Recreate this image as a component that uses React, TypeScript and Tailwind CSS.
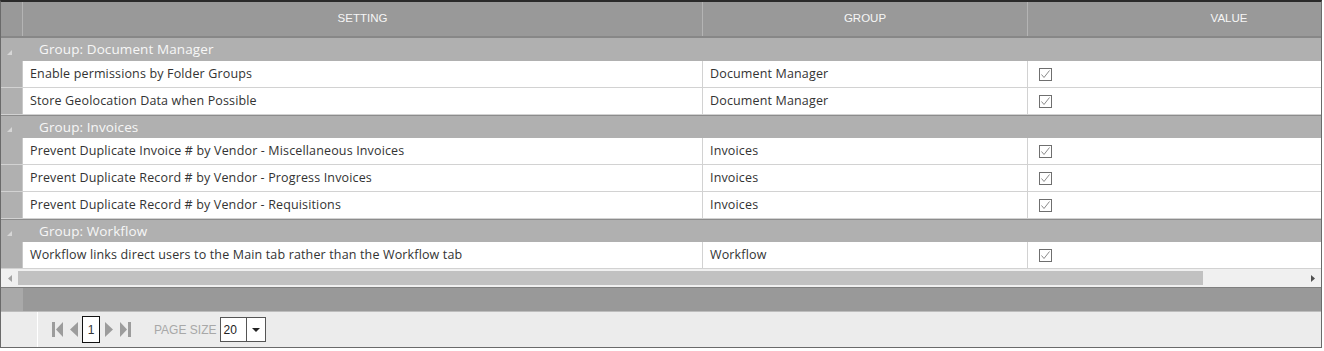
import React from 'react';

type Row = { setting: string; group: string; value: boolean };
type Group = { name: string; rows: Row[] };

const groups: Group[] = [
  {
    name: 'Document Manager',
    rows: [
      { setting: 'Enable permissions by Folder Groups', group: 'Document Manager', value: true },
      { setting: 'Store Geolocation Data when Possible', group: 'Document Manager', value: true },
    ],
  },
  {
    name: 'Invoices',
    rows: [
      { setting: 'Prevent Duplicate Invoice # by Vendor - Miscellaneous Invoices', group: 'Invoices', value: true },
      { setting: 'Prevent Duplicate Record # by Vendor - Progress Invoices', group: 'Invoices', value: true },
      { setting: 'Prevent Duplicate Record # by Vendor - Requisitions', group: 'Invoices', value: true },
    ],
  },
  {
    name: 'Workflow',
    rows: [
      { setting: 'Workflow links direct users to the Main tab rather than the Workflow tab', group: 'Workflow', value: true },
    ],
  },
];

const bodyFont = "font-['Open_Sans',sans-serif]";
const headFont = "font-['Liberation_Sans',Arial,sans-serif]";

function CheckBox({ checked }: { checked: boolean }) {
  return (
    <svg width="13" height="13" viewBox="0 0 13 13" className="block">
      <rect x="0.5" y="0.5" width="12" height="12" fill="#fff" stroke="#6f6f6f" />
      {checked && <path d="M2.5 6.5 L5 9.5 L10.5 2.5" fill="none" stroke="#8a8a8a" strokeWidth="1" />}
    </svg>
  );
}

function GroupRow({ name, first }: { name: string; first: boolean }) {
  return (
    <div className={`flex h-[23px] bg-[#b0b0b0] ${first ? '' : 'border-t border-[#8c8c8c]'}`}>
      <div className="w-[22px] shrink-0 flex items-end pb-[6px] pl-[6px]">
        <svg width="5" height="5" viewBox="0 0 5 5">
          <path d="M5 0 L5 5 L0 5 Z" fill="#d6d6d6" />
        </svg>
      </div>
      <div className={`pl-[16px] flex items-center text-[13.5px] tracking-[0.1px] text-[#f7f7f7] ${bodyFont}`}>Group: {name}</div>
    </div>
  );
}

function DataRow({ row }: { row: Row }) {
  return (
    <div className={`flex h-[27px] border-b border-[#d2d2d2] bg-white text-[12.5px] tracking-[0.15px] text-[#333] ${bodyFont}`}>
      <div className="w-[22px] shrink-0 bg-[#b0b0b0] border-r border-[#c8c8c8]" />
      <div className="w-[680px] shrink-0 border-r border-[#d2d2d2] flex items-center pl-[7px] whitespace-nowrap">
        {row.setting}
      </div>
      <div className="w-[325px] shrink-0 border-r border-[#d2d2d2] flex items-center pl-[7px] whitespace-nowrap">
        {row.group}
      </div>
      <div className="w-[402px] shrink-0 flex items-center pl-[11px]">
        <CheckBox checked={row.value} />
      </div>
    </div>
  );
}

function PagerIcon({ kind }: { kind: 'first' | 'prev' | 'next' | 'last' }) {
  const c = '#9c9c9c';
  return (
    <svg width="11" height="15" viewBox="0 0 11 15" className="block">
      {kind === 'first' && (
        <>
          <rect x="0" y="0" width="3" height="15" fill={c} />
          <path d="M11 0 L4 7.5 L11 15 Z" fill={c} />
        </>
      )}
      {kind === 'prev' && <path d="M9 0 L1 7.5 L9 15 Z" fill={c} />}
      {kind === 'next' && <path d="M1 0 L9 7.5 L1 15 Z" fill={c} />}
      {kind === 'last' && (
        <>
          <path d="M0 0 L7 7.5 L0 15 Z" fill={c} />
          <rect x="8" y="0" width="3" height="15" fill={c} />
        </>
      )}
    </svg>
  );
}

export default function App() {
  return (
    <div className="w-[1324px] h-[351px] bg-white">
      <div className="w-[1322px] h-[348px] border-x border-b border-t-2 border-x-[#6a6a6a] border-b-[#6a6a6a] border-t-[#2a2a2a] overflow-hidden flex flex-col">
        {/* header */}
        <div className={`flex h-[36px] shrink-0 bg-[#999999] border-b-2 border-[#878787] text-[11.5px] text-[#f6f6f6] ${headFont}`}>
          <div className="w-[22px] shrink-0 border-r border-[#b4b4b4]" />
          <div className="w-[680px] shrink-0 border-r border-[#b4b4b4] flex items-center justify-center">SETTING</div>
          <div className="w-[325px] shrink-0 border-r border-[#b4b4b4] flex items-center justify-center">GROUP</div>
          <div className="w-[402px] shrink-0 flex items-center justify-center">VALUE</div>
        </div>

        {/* body */}
        <div className="flex flex-col shrink-0">
          {groups.map((g, gi) => (
            <React.Fragment key={g.name}>
              <GroupRow name={g.name} first={gi === 0} />
              {g.rows.map((r) => (
                <DataRow key={r.setting} row={r} />
              ))}
            </React.Fragment>
          ))}
        </div>

        {/* horizontal scrollbar */}
        <div className="flex items-center h-[18px] shrink-0 bg-[#f0f0f0]">
          <div className="w-[17px] shrink-0 flex items-center justify-center">
            <svg width="4" height="7" viewBox="0 0 4 7"><path d="M4 0 L0 3.5 L4 7 Z" fill="#a3a3a3" /></svg>
          </div>
          <div className="flex-1 h-[14px] flex">
            <div className="w-[1185px] h-full bg-[#c1c1c1]" />
          </div>
          <div className="w-[17px] shrink-0 flex items-center justify-center">
            <svg width="4" height="7" viewBox="0 0 4 7"><path d="M0 0 L4 3.5 L0 7 Z" fill="#505050" /></svg>
          </div>
        </div>

        {/* footer bar */}
        <div className="flex h-[24px] shrink-0 bg-[#999999] border-t border-[#7f7f7f]">
          <div className="w-[22px] shrink-0 bg-[#a9a9a9]" />
        </div>

        {/* pager */}
        <div className="flex flex-1 bg-[#ececec] border-t border-[#bdbdbd]">
          <div className="w-[37px] shrink-0 border-r border-white" />
          <div className="flex items-center pl-[14px]">
            <PagerIcon kind="first" />
            <div className="w-[6px]" />
            <PagerIcon kind="prev" />
            <div className={`ml-[2px] w-[18px] h-[27px] border border-[#111] bg-white flex items-center justify-center text-[12px] text-[#333] ${headFont}`}>
              1
            </div>
            <div className="w-[4px]" />
            <PagerIcon kind="next" />
            <div className="w-[5px]" />
            <PagerIcon kind="last" />
            <div className={`ml-[23px] text-[12px] text-[#a8a8a8] ${headFont}`}>PAGE SIZE</div>
            <div className={`ml-[4px] flex h-[25px] w-[46px] border border-[#555] bg-white text-[12px] text-[#222] ${headFont}`}>
              <div className="w-[26px] border-r border-[#555] flex items-center pl-[2px]">20</div>
              <div className="flex-1 flex items-center justify-center">
                <svg width="8" height="4" viewBox="0 0 8 4"><path d="M0 0 L8 0 L4 4 Z" fill="#222" /></svg>
              </div>
            </div>
          </div>
        </div>
      </div>
    </div>
  );
}
